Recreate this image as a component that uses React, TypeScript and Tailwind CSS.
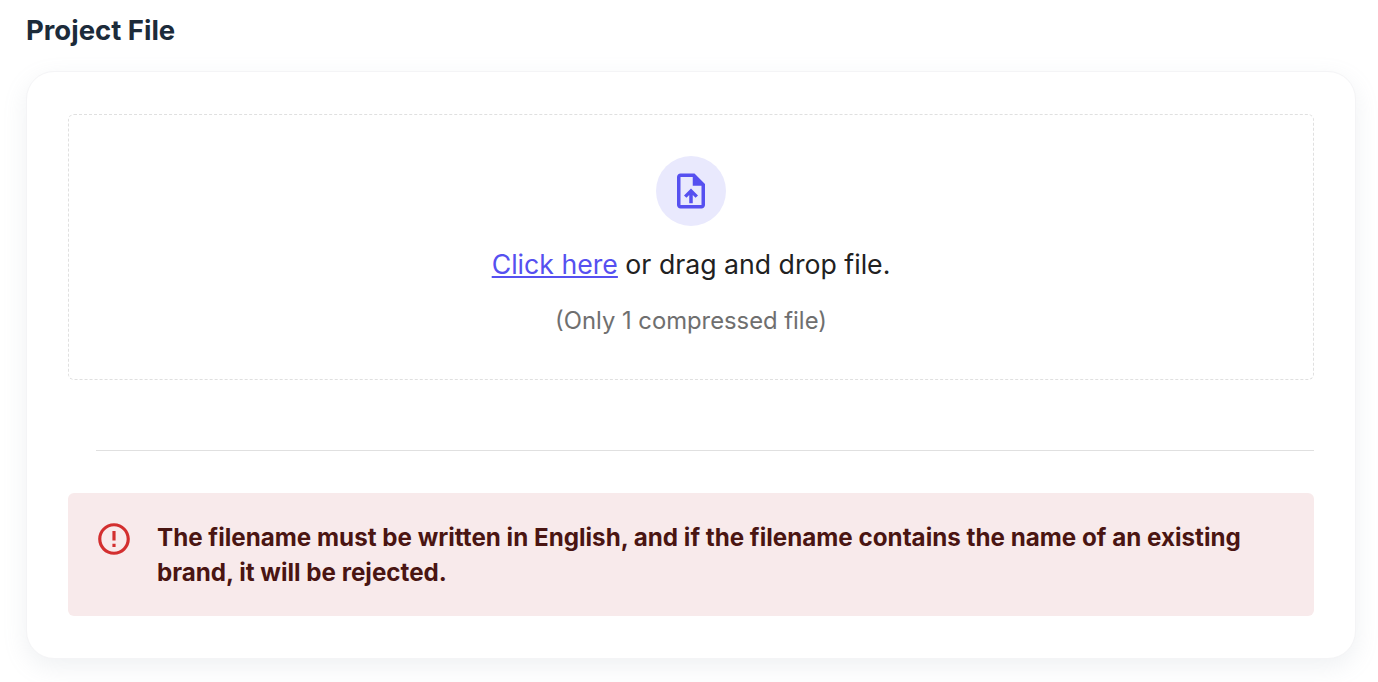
const FileUploadIcon = () => (
  <svg viewBox="0 0 24 24" className="w-[42px] h-[42px]" fill="#5650f0">
    <path d="M14 2H6c-1.1 0-2 .9-2 2v16c0 1.1.9 2 2 2h12c1.1 0 2-.9 2-2V8l-6-6zm4 18H6V4h7v5h5v11zm-10-5.5 1.4 1.4 1.6-1.6V19h2v-4.7l1.6 1.6 1.4-1.4L12 10.5l-4 4z" />
  </svg>
)

const AlertIcon = () => (
  <svg viewBox="0 0 24 24" className="w-[38px] h-[38px] shrink-0" fill="#d32f2f">
    <path d="M11 15h2v2h-2zm0-8h2v6h-2zm.99-5C6.47 2 2 6.48 2 12s4.47 10 9.99 10C17.52 22 22 17.52 22 12S17.52 2 11.99 2zM12 20c-4.42 0-8-3.58-8-8s3.58-8 8-8 8 3.58 8 8-3.58 8-8 8z" />
  </svg>
)

export default function App() {
  return (
    <div className="min-h-[682px] w-full bg-white font-['Inter',sans-serif] overflow-hidden pl-[26px] pr-[22px] pt-[14px] pb-6">
      <h2 className="text-[27.5px] leading-[32px] font-bold text-[#1c2b3a] mb-[25px]">Project File</h2>

      <div className="w-[1330px] h-[588px] rounded-[28px] bg-white border border-[#f4f4f6] shadow-[0_8px_24px_rgba(145,158,171,0.14)] pt-[42px] px-[41px]">
        {/* Dropzone */}
        <div className="h-[266px] rounded-[6px] border border-dashed border-[#e0e0e0] flex flex-col items-center pt-[41px]">
          <div className="w-[70px] h-[70px] rounded-full bg-[#e9e9fd] flex items-center justify-center">
            <FileUploadIcon />
          </div>
          <p className="mt-[19px] text-[26.67px] leading-[38px] text-[#212121]">
            <a className="text-[#5650f0] underline">Click here</a> or drag and drop file.
          </p>
          <p className="mt-[21px] text-[23.8px] leading-[34px] text-[#6f6f6f]">(Only 1 compressed file)</p>
        </div>

        <div className="ml-[28px] mt-[70px] h-px bg-[#e0e0e0]" />

        {/* Warning */}
        <div className="mt-[42px] h-[123px] rounded-[6px] bg-[#f8eaeb] flex items-start pl-[27px] pr-[40px] pt-[27px]">
          <AlertIcon />
          <p className="ml-[24px] text-[24.2px] leading-[35px] font-bold text-[#4a1512]">
            The filename must be written in English, and if the filename contains the name of an existing brand, it will be rejected.
          </p>
        </div>
      </div>
    </div>
  )
}
